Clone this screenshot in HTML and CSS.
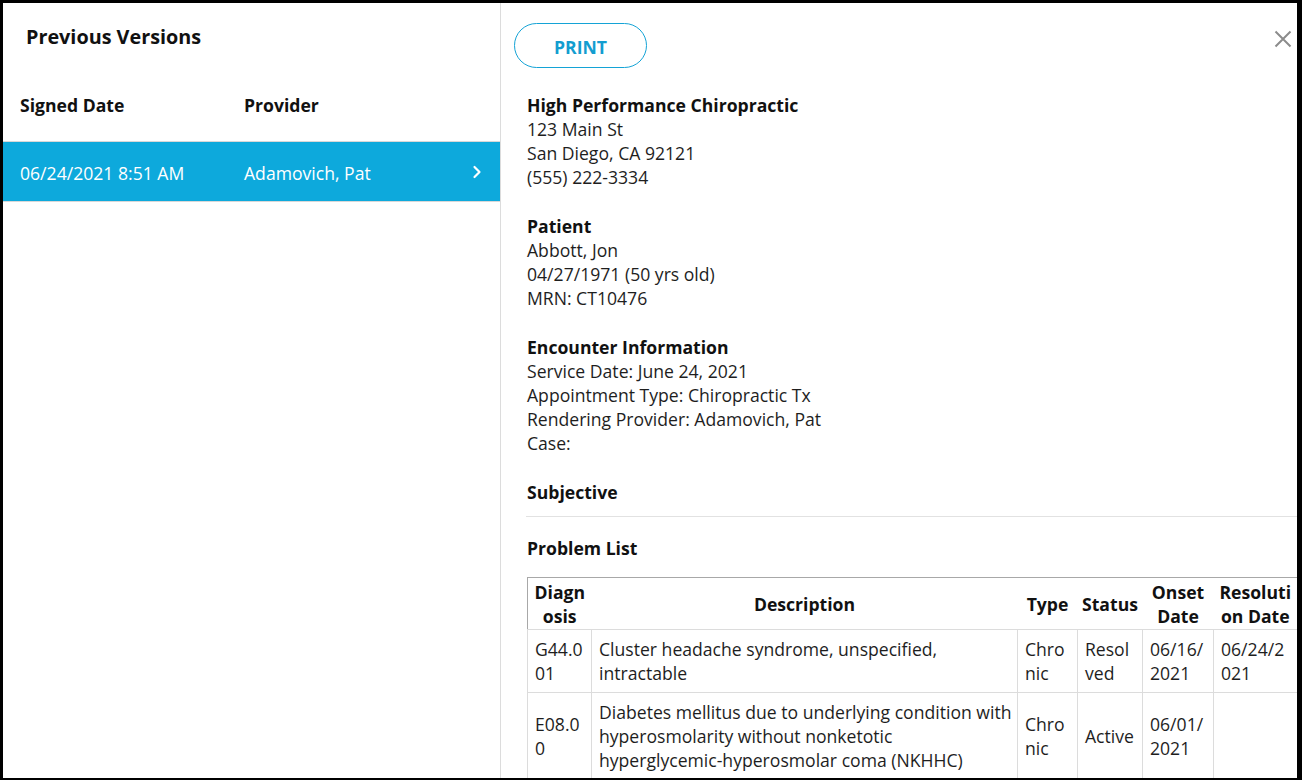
FILE: index.html
```html
<!DOCTYPE html>
<html>
<head>
<meta charset="utf-8">
<link rel="stylesheet" href="styles.css">
</head>
<body>
<div class="frame">
  <aside class="left">
    <h1 class="title">Previous Versions</h1>
    <div class="vhead">
      <div class="c1">Signed Date</div>
      <div class="c2">Provider</div>
    </div>
    <div class="vrow selected">
      <div class="c1">06/24/2021 8:51 AM</div>
      <div class="c2">Adamovich, Pat</div>
      <svg class="chev" width="10" height="14" viewBox="0 0 10 14"><polyline points="2.5,2 7.5,7 2.5,12" fill="none" stroke="#fff" stroke-width="2.2" stroke-linecap="round" stroke-linejoin="round"/></svg>
    </div>
  </aside>
  <main class="right">
    <div class="toolbar">
      <button class="print">PRINT</button>
      <svg class="close" width="18" height="18" viewBox="0 0 18 18"><path d="M1.5 1.5 L16.5 16.5 M16.5 1.5 L1.5 16.5" stroke="#8c8c8c" stroke-width="2" fill="none"/></svg>
    </div>
    <div class="doc">
      <section class="sec">
        <div class="h">High Performance Chiropractic</div>
        <div>123 Main St</div>
        <div>San Diego, CA 92121</div>
        <div>(555) 222-3334</div>
      </section>
      <section class="sec">
        <div class="h">Patient</div>
        <div>Abbott, Jon</div>
        <div>04/27/1971 (50 yrs old)</div>
        <div>MRN: CT10476</div>
      </section>
      <section class="sec">
        <div class="h">Encounter Information</div>
        <div>Service Date: June 24, 2021</div>
        <div>Appointment Type: Chiropractic Tx</div>
        <div>Rendering Provider: Adamovich, Pat</div>
        <div>Case:</div>
      </section>
      <section class="sec subj">
        <div class="h">Subjective</div>
      </section>
      <hr class="sep">
      <section class="sec plist">
        <div class="h">Problem List</div>
      </section>
      <table class="ptable">
        <colgroup>
          <col class="w-diag"><col class="w-desc"><col class="w-type"><col class="w-status"><col class="w-onset"><col class="w-res">
        </colgroup>
        <thead>
          <tr><th>Diagnosis</th><th>Description</th><th>Type</th><th>Status</th><th>Onset Date</th><th>Resolution Date</th></tr>
        </thead>
        <tbody>
          <tr><td>G44.001</td><td class="desc">Cluster headache syndrome, unspecified, intractable</td><td>Chronic</td><td>Resolved</td><td>06/16/2021</td><td>06/24/2021</td></tr>
          <tr><td>E08.00</td><td class="desc">Diabetes mellitus due to underlying condition with hyperosmolarity without nonketotic hyperglycemic-hyperosmolar coma (NKHHC)</td><td>Chronic</td><td>Active</td><td>06/01/2021</td><td></td></tr>
        </tbody>
      </table>
    </div>
  </main>
</div>
</body>
</html>
```
FILE: styles.css
```css
* { box-sizing: border-box; }
html, body { margin: 0; padding: 0; background: #fff; }
body { font-family: "Open Sans", "Noto Sans", sans-serif; color: #1e1e1e; font-size: 17.6px; line-height: 24px; }
.frame {
  width: 1302px; height: 780px;
  border-style: solid; border-color: #000;
  border-width: 3px 5px 2px 3px;
  display: flex; overflow: hidden;
}
.left { width: 498px; flex: none; border-right: 1px solid #dcdcdc; padding-top: 22px; }
.title { margin: 0 0 44px 23px; font-size: 19.8px; font-weight: 700; line-height: 24px; color: #111; }
.vhead, .vrow { display: flex; align-items: center; padding-left: 17px; }
.vhead { height: 49px; align-items: flex-start; border-bottom: 1px solid #d8d8d8; font-weight: 700; color: #111; }
.c1 { width: 224px; }
.c2 { flex: 1; }
.vrow { height: 60px; padding-top: 2px; border-bottom: 1px solid #d8d8d8; }
.vrow.selected { background: #0da9dc; color: #fff; }
.chev { margin-right: 18px; margin-top: -2px; }
.right { flex: 1; min-width: 0; overflow: hidden; padding: 20px 0 0 13px; }
.toolbar { display: flex; justify-content: space-between; align-items: flex-start; }
.print {
  width: 133px; height: 45px; border: 1px solid #14a3d6; border-radius: 23px;
  background: #fff; color: #139dd0; font-family: inherit; font-size: 17.6px; font-weight: 700;
  padding: 2px 0 0; cursor: pointer;
}
.close { margin: 7px 5px 0 0; }
.doc { padding-left: 13px; margin-top: 25px; }
.sec { margin-bottom: 25px; }
.h { font-weight: 700; color: #111; }
.sec.subj { margin-bottom: 12px; }
.sep { border: 0; border-top: 1px solid #e2e2e2; margin: 0 0 19px -1px; }
.sec.plist { margin-bottom: 17px; }
.ptable { border-collapse: collapse; table-layout: fixed; width: 770px; border: 1px solid #a8a8a8; }
.w-diag { width: 64px; } .w-desc { width: 426px; } .w-type { width: 60px; }
.w-status { width: 65px; } .w-onset { width: 71px; } .w-res { width: 84px; }
.ptable th { font-weight: 700; color: #111; text-align: center; padding: 2px 4px 1px; vertical-align: middle; overflow-wrap: anywhere; border-bottom: 1px solid #dcdcdc; }
.ptable td { padding: 7px 7px; text-align: left; vertical-align: middle; overflow-wrap: anywhere; border: 1px solid #dcdcdc; }
.ptable td.desc { padding-right: 3px; }
```
